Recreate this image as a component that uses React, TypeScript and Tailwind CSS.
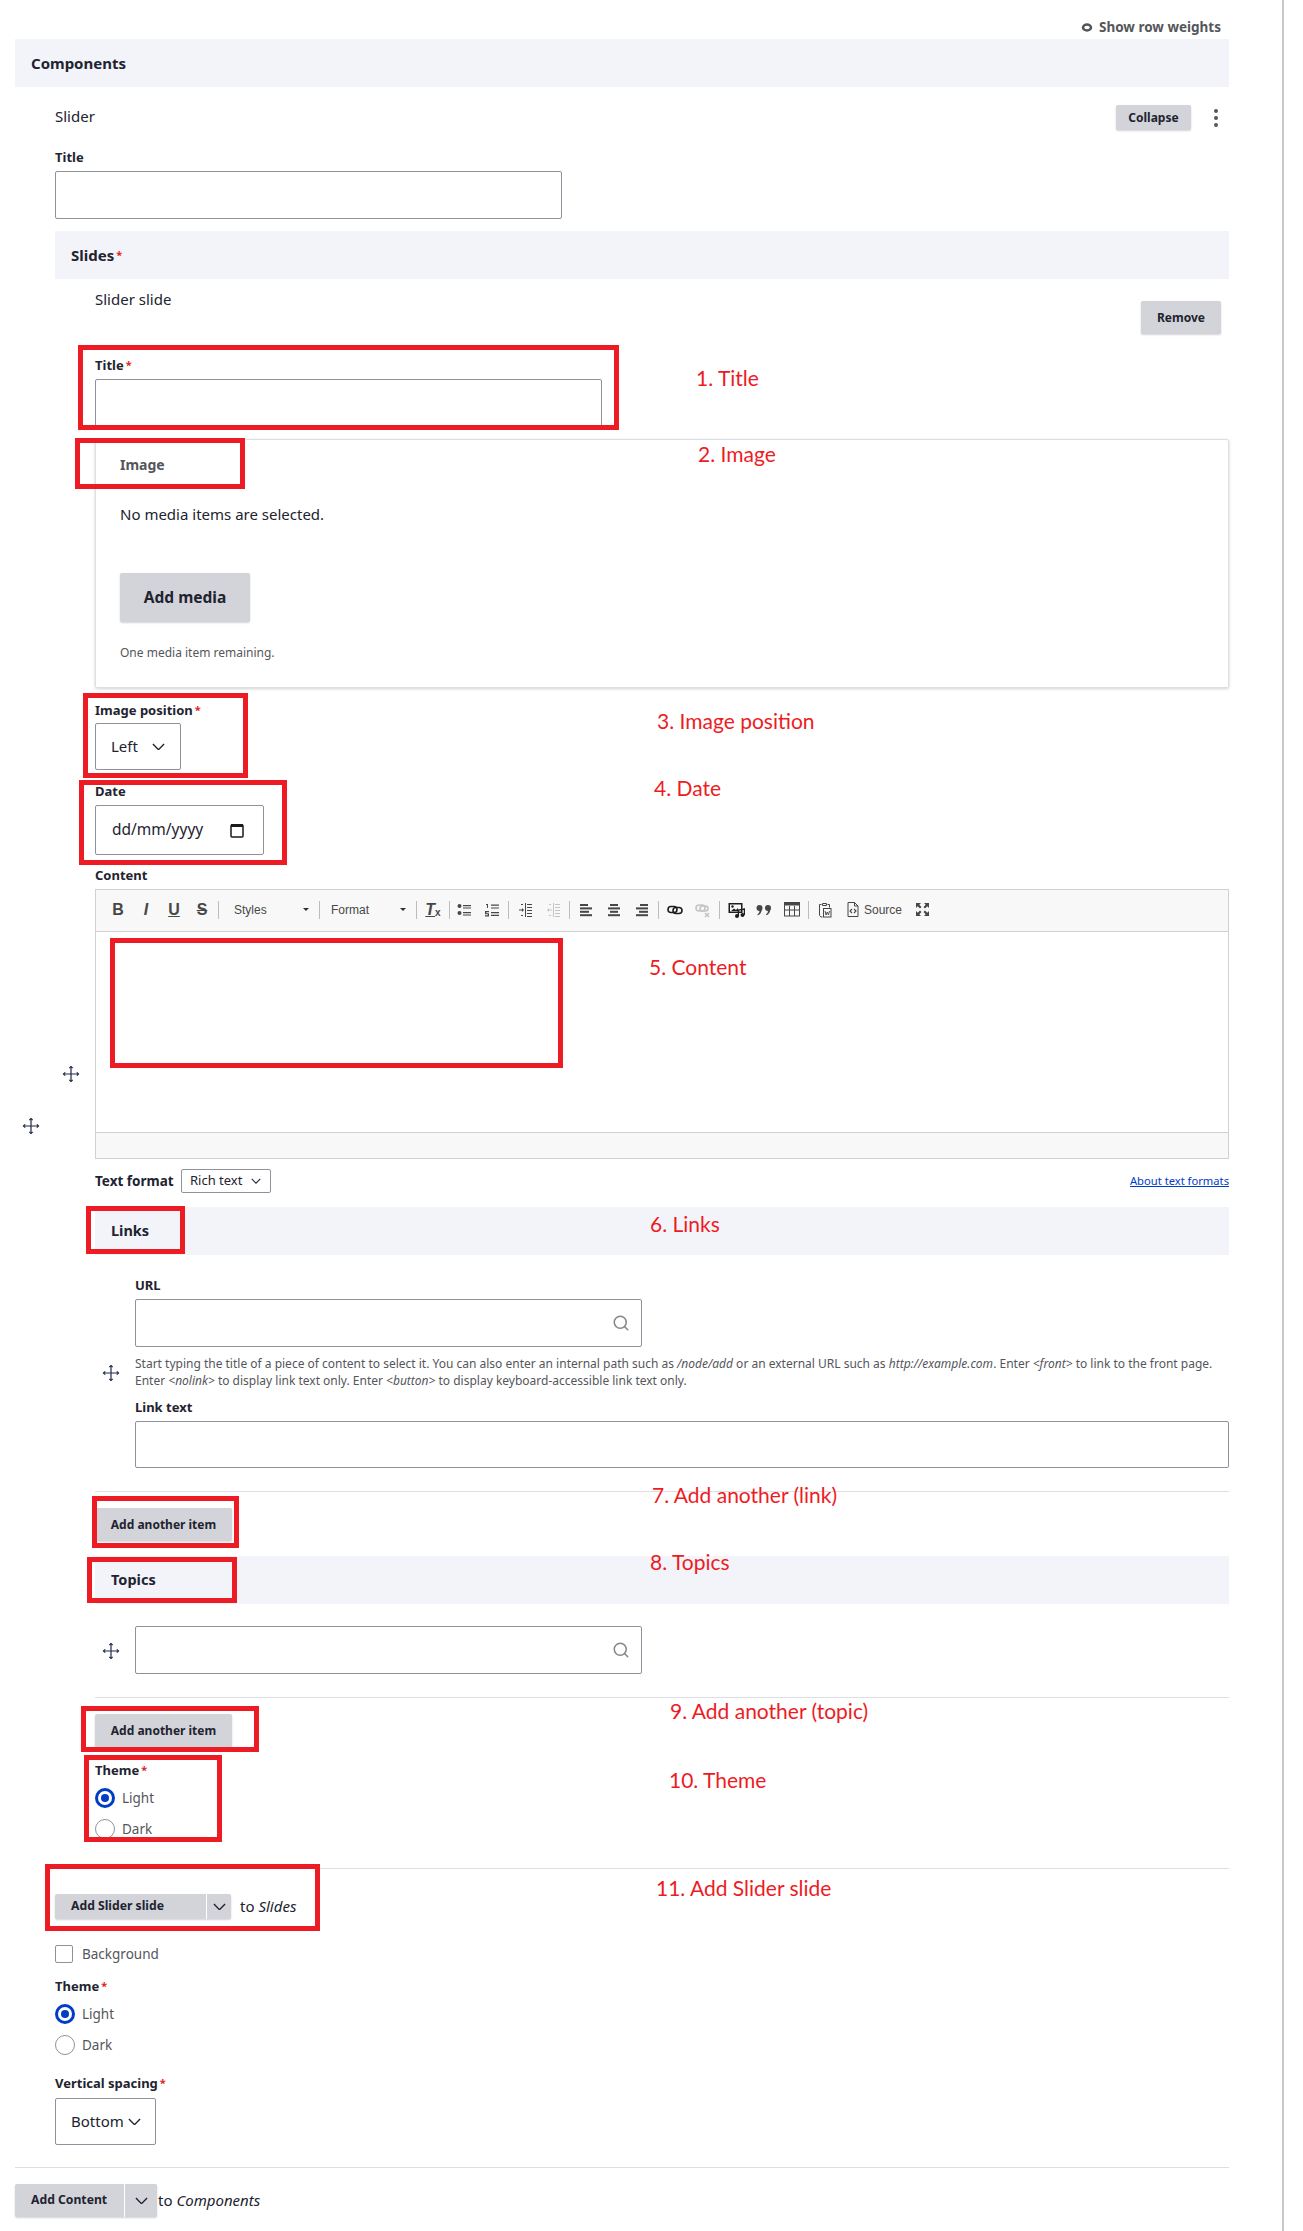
import { ReactNode } from "react";
import { Search } from "lucide-react";

const inputCls = "block rounded-[2px] border border-[#8e929c] bg-white";
const btnCls =
  "flex items-center justify-center rounded-[2px] bg-[#d3d4d9] font-bold text-[#222330] shadow-[0_1px_2px_rgba(34,35,48,0.2)]";

function Req() {
  return <span className="ml-[2px] align-[1px] text-[11px] text-[#dc2323]">*</span>;
}

function Label({ children, required }: { children: ReactNode; required?: boolean }) {
  return (
    <div className="h-[18px] text-[13px] leading-[16px] font-bold text-[#222330]">
      {children}
      {required && <Req />}
    </div>
  );
}

function Handle() {
  return (
    <div className="flex w-[40px] flex-none justify-center pr-[8px]">
      <svg width="18" height="18" viewBox="0 0 18 18" fill="none" stroke="#1f2a44" strokeWidth="1.2">
        <path d="M9 1.5v15M1.5 9h15" />
        <path d="M7.3 3.2 9 1.5l1.7 1.7M7.3 14.8 9 16.5l1.7-1.7M3.2 7.3 1.5 9l1.7 1.7M14.8 7.3 16.5 9l-1.7 1.7" />
      </svg>
    </div>
  );
}

function Bar({ children, size = "text-[14.5px]" }: { children: ReactNode; size?: string }) {
  return (
    <div className={`flex h-[48px] items-center bg-[#f3f4f9] pl-4 font-bold text-[#222330] ${size}`}>{children}</div>
  );
}

function Chevron({ size = 13, stroke = "#222330" }: { size?: number; stroke?: string }) {
  return (
    <svg width={size} height={size * 0.6} viewBox="0 0 14 8" fill="none" stroke={stroke} strokeWidth="1.5">
      <path d="M1 1l6 6 6-6" />
    </svg>
  );
}

function SearchInput() {
  return (
    <div className={`${inputCls} flex h-[48px] w-[507px] items-center justify-end pr-[11px]`}>
      <Search size={18} color="#868686" strokeWidth={2} />
    </div>
  );
}

function Radio({ checked, label }: { checked?: boolean; label: string }) {
  return (
    <div className="flex h-[20px] items-center">
      {checked ? (
        <span className="flex h-[20px] w-[20px] items-center justify-center rounded-full border-[3px] border-[#003cc5]">
          <span className="h-[8px] w-[8px] rounded-full bg-[#003cc5]" />
        </span>
      ) : (
        <span className="h-[20px] w-[20px] rounded-full border border-[#8e929c]" />
      )}
      <span className="ml-[7px] text-[13.5px] text-[#55565b]">{label}</span>
    </div>
  );
}

function Sep({ gap }: { gap?: boolean }) {
  return <span className={`h-[18px] w-px flex-none bg-[#bcbcbc] ${gap ? "mx-[2px]" : ""}`} />;
}

function Tool({ children, w = "w-[28px]" }: { children: ReactNode; w?: string }) {
  return <span className={`flex h-full flex-none items-center justify-center text-[#474747] ${w}`}>{children}</span>;
}

function Combo({ label, w, pl }: { label: string; w: string; pl: string }) {
  return (
    <span className={`flex h-full flex-none items-center justify-between pr-[10px] text-[12px] text-[#484848] ${w} ${pl}`}>
      {label}
      <span className="h-0 w-0 border-x-[3px] border-t-[3px] border-x-transparent border-t-[#2f2f2f]" />
    </span>
  );
}

function Lines({ kind, color = "#474747" }: { kind: "left" | "center" | "right"; color?: string }) {
  const xs = {
    left: [[2, 8], [2, 12], [2, 9], [2, 12]],
    center: [[4, 8], [2, 12], [4, 8], [2, 12]],
    right: [[6, 8], [2, 12], [5, 9], [2, 12]],
  }[kind];
  return (
    <svg width="16" height="16" viewBox="0 0 16 16" fill={color}>
      {xs.map(([x, w], i) => (
        <rect key={i} x={x} y={2 + i * 3.4} width={w} height="2" />
      ))}
    </svg>
  );
}

function Toolbar() {
  return (
    <div className="flex h-[42px] items-center border-b border-[#d1d1d1] bg-[#f8f8f8] pb-[2px] pl-2 font-['Liberation_Sans',sans-serif]">
      <Tool><span className="text-[16px] font-bold">B</span></Tool>
      <Tool><span className="text-[16px] font-bold italic">I</span></Tool>
      <Tool><span className="text-[16px] font-bold underline">U</span></Tool>
      <Tool><span className="text-[16px] font-bold line-through">S</span></Tool>
      <Sep gap />
      <Combo label="Styles" w="w-[98px]" pl="pl-[13px]" />
      <Sep />
      <Combo label="Format" w="w-[96px]" pl="pl-[11px]" />
      <Sep />
      <Tool w="w-[32px]">
        <span className="text-[16px] font-bold italic underline">T</span>
        <span className="mt-[7px] text-[10px] font-bold leading-none">x</span>
      </Tool>
      <Sep />
      <Tool>
        <svg width="16" height="16" viewBox="0 0 16 16" fill="#474747">
          <circle cx="3.5" cy="4" r="2" />
          <circle cx="3.5" cy="11" r="2" />
          <path d="M7 3h8v1.2H7zM7 5.4h8v1.2H7zM7 10h8v1.2H7zM7 12.4h8v1.2H7z" />
        </svg>
      </Tool>
      <Tool>
        <svg width="16" height="16" viewBox="0 0 16 16" fill="#474747">
          <path d="M2 2h2v4H3V3H2zM1 9h4v1.2H2.2v1H5v3.2H1v-1.1h2.8v-1H1zM7 2.5h8v1.2H7zM7 5.4h8v1.2H7zM7 10h8v1.2H7zM7 12.8h8V14H7z" />
        </svg>
      </Tool>
      <Sep gap />
      <Tool>
        <svg width="16" height="16" viewBox="0 0 16 16" fill="#474747">
          <path d="M8 1h1v14H8zM10 2h5v1h-5zM10 5h5v1h-5zM10 8h5v1h-5zM10 11h5v1h-5zM10 14h5v1h-5zM2 7.5h3V6l2 2-2 2V8.5H2zM4 2h2v1H4zM4 13h2v1H4z" />
        </svg>
      </Tool>
      <Tool>
        <svg width="16" height="16" viewBox="0 0 16 16" fill="#c4c4c4">
          <path d="M8 1h1v14H8zM10 2h5v1h-5zM10 5h5v1h-5zM10 8h5v1h-5zM10 11h5v1h-5zM10 14h5v1h-5zM7 7.5H4V6L2 8l2 2V8.5h3zM4 2h2v1H4zM4 13h2v1H4z" />
        </svg>
      </Tool>
      <Sep gap />
      <Tool><Lines kind="left" /></Tool>
      <Tool><Lines kind="center" /></Tool>
      <Tool><Lines kind="right" /></Tool>
      <Sep gap />
      <Tool>
        <svg width="16" height="16" viewBox="0 0 16 16" fill="none" stroke="#1d1d1d" strokeWidth="1.6">
          <rect x="1" y="4.5" width="9" height="6" rx="3" />
          <rect x="6" y="5.5" width="9" height="6" rx="3" />
        </svg>
      </Tool>
      <Tool>
        <svg width="16" height="16" viewBox="0 0 16 16" fill="none" stroke="#c4c4c4" strokeWidth="1.6">
          <rect x="1" y="3" width="9" height="6" rx="3" />
          <rect x="5" y="4" width="8" height="5" rx="2.5" />
          <path d="M10 11l4 4M14 11l-4 4" />
        </svg>
      </Tool>
      <Sep gap />
      <Tool>
        <svg width="17" height="16" viewBox="0 0 17 16">
          <rect x="0.5" y="1" width="14" height="10" fill="#1d1d1d" />
          <rect x="2" y="2.5" width="11" height="7" fill="#f8f8f8" />
          <circle cx="4.5" cy="4.5" r="1.2" fill="#1d1d1d" />
          <path d="M3 9l3-2.5 2 1.5 2-2v3z" fill="#1d1d1d" />
          <circle cx="9" cy="14" r="2" fill="#1d1d1d" />
          <circle cx="14.5" cy="13" r="2" fill="#1d1d1d" />
          <path d="M10.4 14V8l6-1v6" fill="none" stroke="#1d1d1d" strokeWidth="1.3" />
        </svg>
      </Tool>
      <Tool>
        <svg width="16" height="12" viewBox="0 0 16 12" fill="#474747">
          <circle cx="3.5" cy="4" r="3" />
          <path d="M5.8 5c0 3-1.5 5.5-4 6.3l-.4-.9C3 9.5 3.5 8 3.5 6.5z" />
          <circle cx="12" cy="4" r="3" />
          <path d="M14.3 5c0 3-1.5 5.5-4 6.3l-.4-.9c1.6-.9 2.1-2.4 2.1-3.9z" />
        </svg>
      </Tool>
      <Tool>
        <svg width="16" height="15" viewBox="0 0 16 15" fill="none" stroke="#474747">
          <rect x="0.5" y="0.5" width="15" height="13.5" />
          <path d="M0 2h16" strokeWidth="3" />
          <path d="M0.5 8h15M5.5 4v10M10.5 4v10" />
        </svg>
      </Tool>
      <Sep gap />
      <Tool>
        <svg width="14" height="16" viewBox="0 0 14 16" fill="none" stroke="#474747">
          <path d="M3.5 2.5H1.5v11l1.5 1.5h1.5M4.5 1.5h4v2h-4zM9.5 2.5h2v3" />
          <rect x="5.5" y="6.5" width="7.5" height="8.5" />
          <path d="M7 9l1 4 1.2-3 1.3 3 1-4" strokeWidth="0.9" />
        </svg>
      </Tool>
      <Tool>
        <svg width="12" height="15" viewBox="0 0 12 15" fill="none" stroke="#474747">
          <path d="M1 .5h6.5L11 4v10.500H1zM7.5 .5V4H11" />
          <path d="M5 7L3 9l2 2M7 7l2 2-2 2" strokeWidth="1.1" />
        </svg>
      </Tool>
      <span className="-ml-[3px] w-[44px] flex-none text-[12px] text-[#484848]">Source</span>
      <Tool>
        <svg width="15" height="15" viewBox="0 0 15 15" fill="#474747">
          <path d="M1 1h5L4.3 2.7 6.5 5 5 6.5 2.7 4.3 1 6zM14 1v5l-1.7-1.7L10 6.5 8.5 5l2.2-2.3L9 1zM1 14V9l1.7 1.7L5 8.5 6.500 10l-2.2 2.3L6 14zM14 14H9l1.7-1.7L8.500 10 10 8.500l2.300 2.200L14 9z" />
        </svg>
      </Tool>
    </div>
  );
}

function RedBox({ cls }: { cls: string }) {
  return <div className={`absolute border-[5px] border-[#ed1c24] ${cls}`} />;
}

function Note({ cls, children }: { cls: string; children: ReactNode }) {
  return (
    <div className={`absolute font-['Lato',sans-serif] text-[21px] leading-[27px] whitespace-nowrap text-[#ed1c24] ${cls}`}>
      {children}
    </div>
  );
}

export default function App() {
  return (
    <div className="relative min-h-[2231px] w-[1284px] border-r-2 border-[#c8c8c8] bg-white pl-[15px] font-['Noto_Sans',sans-serif] text-[15px] text-[#222330]">
      <div className="w-[1214px]">
        <div className="flex h-[39px] items-start justify-end pt-[18px] pr-[8px]">
          <div className="flex h-[18px] items-center text-[13.5px] font-bold text-[#55565b]">
            <svg className="mr-[6px]" width="12" height="9" viewBox="0 0 12 9" fill="none" stroke="#55565b" strokeWidth="2.5">
              <ellipse cx="6" cy="4.5" rx="4" ry="3" />
            </svg>
            Show row weights
          </div>
        </div>
        <Bar size="text-[15px]">Components</Bar>

        <div className="flex items-center">
          <Handle />
          <div className="min-w-0 flex-1">
            <div className="mt-[18px] flex h-[25px] items-center justify-between">
              <span className="pb-[2px]">Slider</span>
              <div className="flex items-center">
                <button className={`${btnCls} h-[25px] w-[75px] text-[12px]`}>Collapse</button>
                <svg className="mr-[11px] ml-[23px]" width="4" height="18" viewBox="0 0 4 18" fill="#55565b">
                  <circle cx="2" cy="2" r="2" />
                  <circle cx="2" cy="9" r="2" />
                  <circle cx="2" cy="16" r="2" />
                </svg>
              </div>
            </div>
            <div className="mt-[19px]">
              <Label>Title</Label>
            </div>
            <div className={`${inputCls} mt-[4px] h-[48px] w-[507px]`} />
            <div className="mt-[12px]">
              <Bar size="text-[15px]">
                Slides
                <Req />
              </Bar>
            </div>

            <div className="flex items-center border-b border-[#dedfe4]">
              <Handle />
              <div className="min-w-0 flex-1">
                <div className="flex items-start justify-between pt-[12px]">
                  <span className="leading-[16px]">Slider slide</span>
                  <button className={`${btnCls} mt-[10px] mr-[8px] h-[33px] w-[80px] text-[12px]`}>Remove</button>
                </div>
                <div className="mt-[23px]">
                  <Label required>Title</Label>
                </div>
                <div className={`${inputCls} mt-[4px] h-[48px] w-[507px]`} />

                <div className="mt-[12px] h-[249px] rounded-[2px] border border-[#dedfe4] pt-[16px] pl-[24px] shadow-[0_1px_3px_rgba(34,35,48,0.2)]">
                  <div className="h-[18px] text-[14px] leading-[18px] font-bold text-[#55565b]">Image</div>
                  <div className="mt-[32px] h-[18px] leading-[16px]">No media items are selected.</div>
                  <button className={`${btnCls} mt-[49px] h-[49px] w-[130px] text-[15.5px]`}>Add media</button>
                  <div className="mt-[22px] h-[18px] text-[12px] leading-[18px] text-[#55565b]">One media item remaining.</div>
                </div>

                <div className="mt-[14px]">
                  <Label required>Image position</Label>
                </div>
                <div className={`${inputCls} mt-[3px] flex h-[47px] w-[86px] items-center justify-between pr-[15px] pl-[15px]`}>
                  Left
                  <Chevron />
                </div>

                <div className="mt-[13px]">
                  <Label>Date</Label>
                </div>
                <div className={`${inputCls} mt-[4px] flex h-[50px] w-[169px] items-center justify-between pr-[19px] pl-[16px] text-[15.5px]`}>
                  dd/mm/yyyy
                  <svg width="14" height="16" viewBox="0 0 14 16" fill="none" stroke="#1a1a1a">
                    <rect x="1" y="3" width="12" height="12" rx="1" strokeWidth="1.5" />
                    <path d="M1 3.5h12" strokeWidth="3" />
                  </svg>
                </div>

                <div className="mt-[12px]">
                  <Label>Content</Label>
                </div>
                <div className="mt-[4px] border border-[#d1d1d1]">
                  <Toolbar />
                  <div className="h-[200px]" />
                  <div className="h-[26px] border-t border-[#d1d1d1] bg-[#f8f8f8]" />
                </div>

                <div className="mt-[10px] flex h-[24px] items-center justify-between">
                  <div className="flex items-center">
                    <span className="w-[86px] text-[13.5px] font-bold">Text format</span>
                    <div className="flex h-[24px] w-[90px] items-center justify-between rounded-[2px] border border-[#8e929c] pr-[9px] pl-[8px] text-[13px]">
                      Rich text
                      <Chevron size={10} />
                    </div>
                  </div>
                  <a className="text-[11.2px] text-[#003cc5] underline">About text formats</a>
                </div>

                <div className="mt-[14px]">
                  <Bar>Links</Bar>
                </div>
                <div className="flex items-center border-b border-[#dedfe4]">
                  <Handle />
                  <div className="min-w-0 flex-1 pb-[23px]">
                    <div className="mt-[22px]">
                      <Label>URL</Label>
                    </div>
                    <div className="mt-[4px]">
                      <SearchInput />
                    </div>
                    <p className="mt-[8px] text-[12px] leading-[17px] text-[#55565b]">
                      Start typing the title of a piece of content to select it. You can also enter an internal path such as <em>/node/add</em> or an external URL such as <em>http://example.com</em>. Enter <em>&lt;front&gt;</em> to link to the front page.
                      <br />
                      Enter <em>&lt;nolink&gt;</em> to display link text only. Enter <em>&lt;button&gt;</em> to display keyboard-accessible link text only.
                    </p>
                    <div className="mt-[10px]">
                      <Label>Link text</Label>
                    </div>
                    <div className={`${inputCls} mt-[4px] h-[47px]`} />
                  </div>
                </div>
                <button className={`${btnCls} mt-[16px] h-[33px] w-[137px] text-[12px]`}>Add another item</button>

                <div className="mt-[15px]">
                  <Bar>Topics</Bar>
                </div>
                <div className="flex items-center border-b border-[#dedfe4]">
                  <Handle />
                  <div className="min-w-0 flex-1 pt-[22px] pb-[23px]">
                    <SearchInput />
                  </div>
                </div>
                <button className={`${btnCls} mt-[16px] h-[33px] w-[137px] text-[12px]`}>Add another item</button>

                <div className="mt-[15px]">
                  <Label required>Theme</Label>
                </div>
                <div className="mt-[8px]">
                  <Radio checked label="Light" />
                </div>
                <div className="mt-[11px] mb-[29px]">
                  <Radio label="Dark" />
                </div>
              </div>
            </div>

            <div className="mt-[25px] flex items-center">
              <div className="flex h-[25px] overflow-hidden rounded-[2px] bg-[#d3d4d9] shadow-[0_1px_2px_rgba(34,35,48,0.2)]">
                <span className="flex w-[151px] items-center pl-[16px] text-[12.2px] font-bold">Add Slider slide</span>
                <span className="flex w-[25px] items-center justify-center border-l border-white">
                  <Chevron />
                </span>
              </div>
              <span className="ml-[9px]">
                to <em>Slides</em>
              </span>
            </div>

            <div className="mt-[26px] flex h-[18px] items-center">
              <span className="h-[18px] w-[18px] rounded-[2px] border border-[#8e929c]" />
              <span className="ml-[9px] text-[13.5px] text-[#55565b]">Background</span>
            </div>

            <div className="mt-[15px]">
              <Label required>Theme</Label>
            </div>
            <div className="mt-[8px]">
              <Radio checked label="Light" />
            </div>
            <div className="mt-[11px]">
              <Radio label="Dark" />
            </div>

            <div className="mt-[20px]">
              <Label required>Vertical spacing</Label>
            </div>
            <div className={`${inputCls} mt-[5px] mb-[19px] flex h-[47px] w-[101px] items-center justify-between pr-[14px] pl-[15px]`}>
              Bottom
              <Chevron />
            </div>
          </div>
        </div>

        <div className="mt-[3px] border-t border-[#dedfe4]">
          <div className="mt-[16px] flex items-center">
            <div className="flex h-[33px] overflow-hidden rounded-[2px] bg-[#d3d4d9] shadow-[0_1px_2px_rgba(34,35,48,0.2)]">
              <span className="flex w-[109px] items-center pl-[16px] text-[12.2px] font-bold">Add Content</span>
              <span className="flex w-[33px] items-center justify-center border-l border-white">
                <Chevron />
              </span>
            </div>
            <span className="ml-px">
              to <em>Components</em>
            </span>
          </div>
        </div>
      </div>

      <RedBox cls="top-[345px] left-[78px] h-[85px] w-[541px]" />
      <RedBox cls="top-[438px] left-[75px] h-[51px] w-[170px]" />
      <RedBox cls="top-[693px] left-[83px] h-[85px] w-[165px]" />
      <RedBox cls="top-[780px] left-[79px] h-[85px] w-[208px]" />
      <RedBox cls="top-[938px] left-[110px] h-[130px] w-[453px]" />
      <RedBox cls="top-[1206px] left-[86px] h-[48px] w-[99px]" />
      <RedBox cls="top-[1496px] left-[92px] h-[52px] w-[147px]" />
      <RedBox cls="top-[1557px] left-[87px] h-[46px] w-[150px]" />
      <RedBox cls="top-[1706px] left-[81px] h-[46px] w-[178px]" />
      <RedBox cls="top-[1755px] left-[84px] h-[87px] w-[138px]" />
      <RedBox cls="top-[1864px] left-[45px] h-[67px] w-[275px]" />

      <Note cls="top-[364px] left-[696px]">1. Title</Note>
      <Note cls="top-[440px] left-[698px]">2. Image</Note>
      <Note cls="top-[707px] left-[657px]">3. Image position</Note>
      <Note cls="top-[774px] left-[654px]">4. Date</Note>
      <Note cls="top-[953px] left-[649px]">5. Content</Note>
      <Note cls="top-[1210px] left-[650px]">6. Links</Note>
      <Note cls="top-[1481px] left-[652px]">7. Add another (link)</Note>
      <Note cls="top-[1548px] left-[650px]">8. Topics</Note>
      <Note cls="top-[1697px] left-[670px]">9. Add another (topic)</Note>
      <Note cls="top-[1766px] left-[669px]">10. Theme</Note>
      <Note cls="top-[1874px] left-[656px]">11. Add Slider slide</Note>
    </div>
  );
}
